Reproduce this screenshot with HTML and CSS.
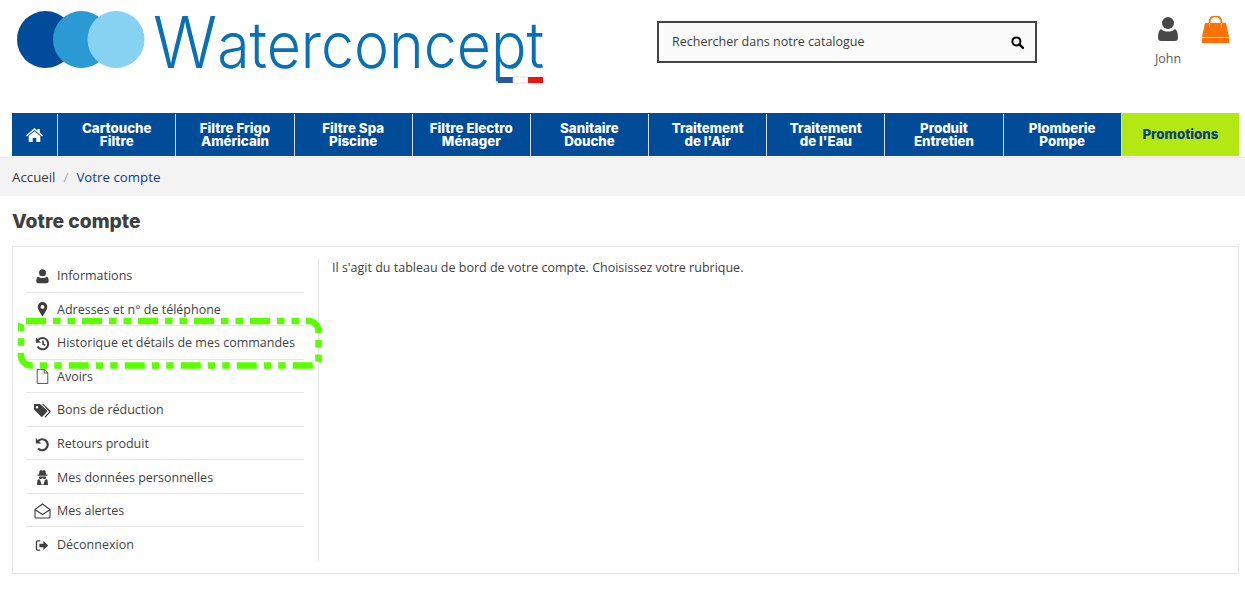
FILE: index.html
```html
<!DOCTYPE html>
<html lang="fr">
<head>
<meta charset="utf-8">
<title>Votre compte</title>
<link rel="stylesheet" href="styles.css">
</head>
<body>
<header class="top">
  <a class="logo" href="#">
    <svg width="530" height="96" viewBox="0 0 530 96">
      <circle cx="28.500" cy="39.500" r="28.500" fill="#004c9b"/>
      <circle cx="64.500" cy="39.500" r="28.500" fill="#2b99d3"/>
      <circle cx="99" cy="39.500" r="28.500" fill="#87d2f3"/>
      <text class="wordmark" x="136" y="68" textLength="391" lengthAdjust="spacingAndGlyphs"><tspan class="cap">W</tspan>aterconcept</text>
      <rect x="481" y="77" width="15" height="6" fill="#2a56a8"/>
      <rect x="496" y="77" width="15" height="6" fill="#fff" stroke="#ccc" stroke-width=".6"/>
      <rect x="511" y="77" width="15" height="6" fill="#e8170f"/>
    </svg>
  </a>
  <form class="search">
    <span class="search-text">Rechercher dans notre catalogue</span>
    <svg class="search-icon" width="13" height="13" viewBox="0 0 13 13"><circle cx="5.400" cy="5.400" r="4" fill="none" stroke="#000" stroke-width="2"/><path d="M8.300 8.300l3.600 3.600" stroke="#000" stroke-width="2.400" stroke-linecap="round"/></svg>
  </form>
  <div class="user">
    <svg width="20" height="25" viewBox="0 0 20 25"><circle cx="10" cy="6" r="6" fill="#484848"/><path d="M3 12c2 2 4.500 2.500 7 2.500s5-.5 7-2.500c2 1 3 4 3 9 0 2-1.500 3-3 3H3c-1.500 0-3-1-3-3 0-5 1-8 3-9z" fill="#484848"/></svg>
    <span>John</span>
  </div>
  <a class="cart" href="#">
    <svg width="27" height="27" viewBox="0 0 27 27"><path d="M7.500 11V6a6 6 0 0 1 12 0v5" fill="none" stroke="#ff7100" stroke-width="1.800"/><path d="M3 7h21l3 14H0z" fill="#ff7100"/><path d="M7.500 7v5M19.500 7v5" stroke="#ffd2ad" stroke-width="1"/><path d="M0 22h27v5H0z" fill="#ff7100"/></svg>
  </a>
</header>

<nav class="menu">
  <a class="item home" href="#"><svg width="17" height="14" viewBox="0 0 17 14"><path d="M8.500 0l3 2.600V1h2.300v3.600L17 7.400l-.9 1L8.500 2 .9 8.400 0 7.400z" fill="#fff"/><path d="M8.500 3.200l5.800 4.900V14h-4v-4h-3.600v4h-4V8.100z" fill="#fff"/></svg></a>
  <a class="item" href="#">Cartouche<br>Filtre</a>
  <a class="item" href="#">Filtre Frigo<br>Américain</a>
  <a class="item" href="#">Filtre Spa<br>Piscine</a>
  <a class="item" href="#">Filtre Electro<br>Ménager</a>
  <a class="item" href="#">Sanitaire<br>Douche</a>
  <a class="item" href="#">Traitement<br>de l'Air</a>
  <a class="item" href="#">Traitement<br>de l'Eau</a>
  <a class="item" href="#">Produit<br>Entretien</a>
  <a class="item" href="#">Plomberie<br>Pompe</a>
  <a class="item promo" href="#">Promotions</a>
</nav>

<div class="crumbs"><a href="#">Accueil</a><span class="sep">/</span><span class="current">Votre compte</span></div>

<main class="page">
  <h1>Votre compte</h1>
  <section class="card">
    <ul class="side">
      <li><svg width="15" height="15" viewBox="0 0 15 15"><circle cx="7.500" cy="3.800" r="3.500" fill="#3f3f3f"/><path d="M3 7.500c1.200 1 2.700 1.500 4.500 1.500s3.300-.5 4.500-1.500c1.200.8 1.700 2.800 1.700 4.800 0 1.200-.8 2-2 2H3.300c-1.200 0-2-.8-2-2 0-2 .5-4 1.700-4.800z" fill="#3f3f3f"/></svg>Informations</li>
      <li><svg width="15" height="15" viewBox="0 0 15 15"><path fill-rule="evenodd" d="M7.500 0a4.800 4.800 0 0 1 4.800 4.800c0 3-2.800 6.200-4.800 10-2-3.800-4.800-7-4.800-10A4.800 4.800 0 0 1 7.500 0zm0 3a1.900 1.900 0 1 0 0 3.800 1.900 1.900 0 0 0 0-3.800z" fill="#3f3f3f"/></svg>Adresses et n° de téléphone</li>
      <li><svg width="15" height="15" viewBox="0 0 15 15"><path d="M3 4.200a5.700 5.700 0 1 1-.4 6.300" fill="none" stroke="#3f3f3f" stroke-width="2"/><path d="M.8 1.500l5.200 5.200H.8z" fill="#3f3f3f"/><path d="M8 4.500v3.500l2.300 1.400" fill="none" stroke="#3f3f3f" stroke-width="1.600"/></svg>Historique et détails de mes commandes</li>
      <li><svg width="15" height="17" viewBox="0 0 15 17"><path d="M1.500.5h8l4 4v12h-12z M9.500.5v4h4" fill="none" stroke="#3f3f3f"/></svg>Avoirs</li>
      <li><svg class="wide" width="17" height="14" viewBox="0 0 17 14"><path fill-rule="evenodd" d="M0 1.500V6l7 7c.5.500 1 .500 1.500 0l4.500-4.800c.5-.5.500-1 0-1.500L6 .5H1C.4.500 0 .9 0 1.500zM3 2.500a1.200 1.200 0 1 1 0 2.400 1.200 1.200 0 0 1 0-2.400z" fill="#3f3f3f"/><path d="M8 .5h1.500L16.500 7.200c.5.500.5 1 0 1.500L11.500 14l-1.200-.5 5-5.200z" fill="#3f3f3f"/></svg>Bons de réduction</li>
      <li><svg width="15" height="15" viewBox="0 0 15 15"><path d="M3 4.200a5.500 5.500 0 1 1 .2 7.300" fill="none" stroke="#3f3f3f" stroke-width="2.200"/><path d="M.8 1l5.400 5.400H.8z" fill="#3f3f3f"/></svg>Retours produit</li>
      <li><svg width="15" height="15" viewBox="0 0 15 15"><path fill-rule="evenodd" d="M4.500 1.200C5 .2 6 .2 7.500.7c1.500-.5 2.500-.5 3 .5L11 4.500h1.500v1.200h-10V4.500H4zM4 6.500h7v1.300c0 1-.7 1.200-1.500 1.200-1 0-1.200-.8-2-.8s-1 .8-2 .8C4.700 9 4 8.800 4 7.800zM3.800 9.300l1.200.5 1.500 4.700h2l1.500-4.700 1.200-.5 1.300.5.500 5.200H2l.5-5.200z" fill="#3f3f3f"/></svg>Mes données personnelles</li>
      <li><svg class="wide alert" width="17" height="16" viewBox="0 0 17 16"><path d="M1 6.500L8.500 1 16 6.500V14c0 .6-.4 1-1 1H2c-.6 0-1-.4-1-1z M1.500 7l7 4.500 7-4.500" fill="none" stroke="#3f3f3f" stroke-width="1.100"/></svg>Mes alertes</li>
      <li><svg width="15" height="13" viewBox="-1 -1 17 15"><path d="M5 1.200H2C1.200 1.200.7 1.700.7 2.500v8c0 .8.500 1.300 1.300 1.300h3" fill="none" stroke="#3f3f3f" stroke-width="1.500"/><path d="M4 4.500h4.500V1.500l5.500 5-5.500 5v-3H4z" fill="#3f3f3f"/></svg>Déconnexion</li>
    </ul>
    <p class="intro">Il s'agit du tableau de bord de votre compte. Choisissez votre rubrique.</p>
    <svg class="mark" width="312" height="60" viewBox="0 0 312 60"><path d="M11 6H293.500A10 10 0 0 1 303.500 16V45.500A5 5 0 0 1 298.500 50.500H16A10 10 0 0 1 6 40.500V11A5 5 0 0 1 11 6" fill="none" stroke="#5cff00" stroke-width="6.500" stroke-dasharray="20 7 7.500 7 7.500 7"/></svg>
  </section>
</main>
</body>
</html>
```

FILE: styles.css
```css
* { box-sizing: border-box; }
html, body { margin: 0; padding: 0; }
body {
  background: #fff;
  color: #3f3f3f;
  font-family: "Open Sans", "Liberation Sans", sans-serif;
  font-size: 12.500px;
  line-height: 18px;
  overflow: hidden;
}
a { color: inherit; text-decoration: none; }

.top { display: flex; height: 113px; padding: 0 0 0 17px; }
.logo { display: block; width: 530px; height: 96px; }
.wordmark { font-family: Inter, sans-serif; font-size: 64px; font-weight: 300; fill: #0a70b6; }
.cap { font-size: 72px; }
.search {
  display: flex; align-items: center; justify-content: space-between;
  width: 380px; height: 42px;
  margin: 21px 0 0 110px;
  padding: 0 11px 0 13px;
  border: 2px solid #454545;
  background: #fbfbfb;
  color: #3c3c3c;
}
.user { display: flex; flex-direction: column; align-items: center; margin: 17px 0 0 116px; width: 30px; color: #5a5a5a; }
.user span { margin-top: 8px; line-height: 18px; }
.cart { display: block; margin: 16px 0 0 19px; width: 27px; height: 27px; }

.menu { display: flex; height: 43px; margin: 0 6px 0 12px; background: #004c98; }
.item {
  display: flex; align-items: center; justify-content: center; flex: 0 0 118.180px;
  text-align: center; color: #fff;
  font-family: Inter, "Liberation Sans", sans-serif;
  font-weight: 800; font-size: 13.300px; line-height: 13px;
  border-left: 1px solid #d9d9d9;
  margin-top: 1px;
}
.item.home { flex: 0 0 45.200px; border-left: 0; }
.item.promo { flex: 1 1 auto; background: #b3e812; color: #0d3c80; margin-top: 0; }

.crumbs {
  display: flex; align-items: center; height: 39px; margin-top: 1px;
  padding: 0 12px; background: #f3f3f3;
  border-top: 1px solid #e9e9e9;
  color: #3a3a3a;
  font-size: 13.300px;
}
.sep { margin: 0 8px; color: #aaa; }
.current { color: #0f3a8f; }

.page { padding: 0 6px 0 12px; }
h1 {
  margin: 14px 0 14px; height: 22px;
  font-family: Inter, "Liberation Sans", sans-serif;
  font-size: 19.300px; line-height: 22px; font-weight: 800; color: #3f3f3f;
}
.card {
  position: relative;
  display: flex; height: 328px; padding: 11px 13px 12px 13px;
  border: 1px solid #e6e6e6;
}
.side {
  list-style: none; margin: 0; padding: 1px 14px 0 0;
  width: 293px; height: 303px;
  border-right: 1px solid #e6e6e6;
}
.side li {
  display: flex; align-items: center; gap: 7px;
  width: 278px; height: 33.550px; padding: 2px 0 0 9px;
  border-bottom: 1px solid #e6e6e6;
  color: #3f3f3f;
}
.side li:last-child { border-bottom: 0; }
.side li svg { flex: 0 0 auto; width: 15px; height: 15px; }
.side li svg.wide { width: 17px; margin: 0 -1px; }
.side li svg.alert { height: 16px; }
.intro { margin: 1px 0 0 13px; line-height: 18px; }
.mark { position: absolute; left: 2px; top: 68px; }
```
